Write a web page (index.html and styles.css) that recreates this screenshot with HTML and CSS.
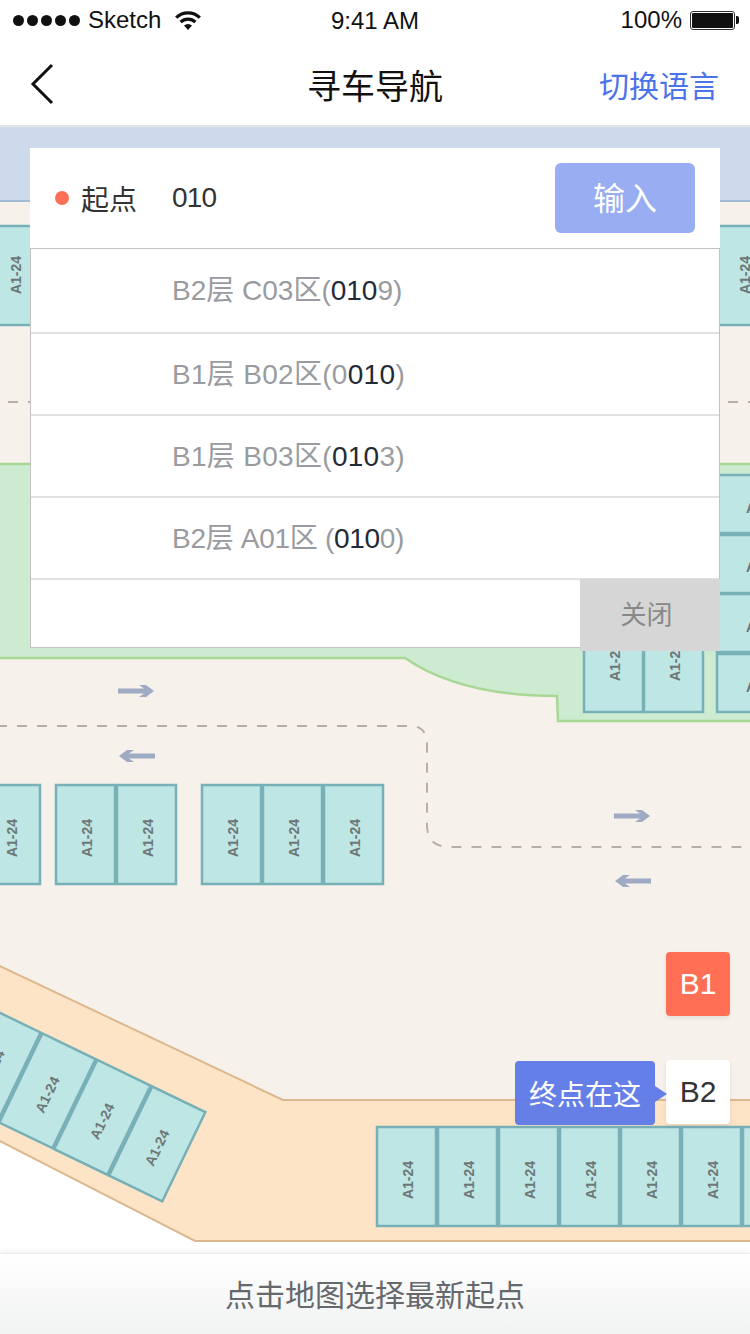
FILE: index.html
```html
<!DOCTYPE html>
<html lang="zh-CN">
<head>
    <meta charset="UTF-8">
    <meta name="viewport" content="width=device-width, initial-scale=1.0">
    <title>寻车导航</title>
    <link rel="stylesheet" href="styles.css">
</head>
<body>
    <div id="app">
        <div class="status-bar">
            <div class="status-left">
                <div class="signal"><i></i><i></i><i></i><i></i><i></i></div>
                <span class="carrier">Sketch</span>
                <svg class="wifi" width="26" height="19" viewBox="0 0 26 19">
                    <path d="M1.2 6.6A17 17 0 0 1 24.8 6.6" fill="none" stroke="#111" stroke-width="3.2"/>
                    <path d="M5.6 11A10.8 10.8 0 0 1 20.4 11" fill="none" stroke="#111" stroke-width="3.2"/>
                    <path d="M9 14.6a6 6 0 0 1 8 0L13 19z" fill="#111"/>
                </svg>
            </div>
            <span class="clock">9:41 AM</span>
            <div class="status-right">
                <span>100%</span>
                <div class="battery"><div class="battery-level"></div></div>
            </div>
        </div>

        <div class="nav-bar">
            <svg class="back" width="24" height="42" viewBox="0 0 24 42">
                <path d="M22 2L3 21L22 40" fill="none" stroke="#111" stroke-width="3"/>
            </svg>
            <h1>寻车导航</h1>
            <a class="lang">切换语言</a>
        </div>

        <div class="map">
            <svg class="map-canvas" width="750" height="1126" viewBox="0 127 750 1126">
                <defs>
                    <g id="stall">
                        <rect x="1" y="1" width="59" height="99" class="stall-box"/>
                        <text transform="translate(32 54) rotate(-90)" class="stall-label">A1-24</text>
                    </g>
                    <g id="stall-high">
                        <rect x="1" y="1" width="59" height="99" class="stall-box"/>
                        <text transform="translate(32 50) rotate(-90)" class="stall-label">A1-24</text>
                    </g>
                    <path id="arrow" d="M0-2.5H26L21-6H28L36 0L28 6H21L26 2.5H0z" fill="#9eabc2"/>
                </defs>

                <rect x="0" y="127" width="750" height="1126" fill="#fff"/>
                <rect x="0" y="127" width="750" height="75" fill="#cddaeb"/>
                <rect x="0" y="200" width="750" height="2" fill="#a3bcd6"/>
                <rect x="0" y="202" width="750" height="900" fill="#f6f1eb"/>

                <path d="M-3 464H753V721H558L557 696Q460 696 405 658H-3z" fill="#cdebd0" stroke="#a9d795" stroke-width="2.5"/>
                <path d="M-3 964.6L283 1100H753V1241H195L-3 1139.5z" fill="#fde4c6" stroke="#dcb88f" stroke-width="2"/>

                <path d="M8 402H750" class="road"/>
                <path d="M-3 726H411Q427 726 427 745V825Q427 847 450 847H750" class="road"/>

                <use href="#arrow" transform="translate(118 691)"/>
                <use href="#arrow" transform="translate(155 756) scale(-1 1)"/>
                <use href="#arrow" transform="translate(614 816)"/>
                <use href="#arrow" transform="translate(651 881) scale(-1 1)"/>

                <use href="#stall-high" x="-16" y="225"/>
                <use href="#stall-high" x="713" y="225"/>

                <use href="#stall-high" x="583" y="612"/>
                <use href="#stall-high" x="643" y="612"/>

                <g class="stall-side">
                    <rect x="717" y="475" width="60" height="58" class="stall-box"/>
                    <rect x="717" y="535" width="60" height="58" class="stall-box"/>
                    <rect x="717" y="594" width="60" height="58" class="stall-box"/>
                    <rect x="717" y="654" width="60" height="58" class="stall-box"/>
                    <text x="746" y="513" class="stall-label-flat">A1-24</text>
                    <text x="746" y="572" class="stall-label-flat">A1-24</text>
                    <text x="746" y="632" class="stall-label-flat">A1-24</text>
                    <text x="746" y="692" class="stall-label-flat">A1-24</text>
                </g>

                <use href="#stall" x="-20" y="784"/>
                <use href="#stall" x="55" y="784"/>
                <use href="#stall" x="116" y="784"/>
                <use href="#stall" x="201" y="784"/>
                <use href="#stall" x="262" y="784"/>
                <use href="#stall" x="323" y="784"/>

                <g transform="translate(206.7 1111.7) rotate(25.8)">
                    <use href="#stall" x="-61" y="0"/>
                    <use href="#stall" x="-122" y="0"/>
                    <use href="#stall" x="-183" y="0"/>
                    <use href="#stall" x="-244" y="0"/>
                    <use href="#stall" x="-305" y="0"/>
                </g>

                <use href="#stall" x="376" y="1126"/>
                <use href="#stall" x="437" y="1126"/>
                <use href="#stall" x="498" y="1126"/>
                <use href="#stall" x="559" y="1126"/>
                <use href="#stall" x="620" y="1126"/>
                <use href="#stall" x="681" y="1126"/>
                <use href="#stall" x="742" y="1126"/>
            </svg>

            <div class="search-panel">
                <div class="search-head">
                    <i class="dot"></i>
                    <span class="search-label">起点</span>
                    <span class="search-value">010</span>
                    <button class="input-btn">输入</button>
                </div>
                <div class="result-list">
                    <div class="result">B2层 C03区(<b>010</b>9)</div>
                    <div class="result result-wide">B1层 B02区(0<b>010</b>)</div>
                    <div class="result result-wide">B1层 B03区(<b>010</b>3)</div>
                    <div class="result result-tight">B2层 A01区 (<b>010</b>0)</div>
                    <div class="result-foot">
                        <button class="close-btn">关闭</button>
                    </div>
                </div>
            </div>

            <div class="floors">
                <button class="floor floor-on">B1</button>
                <div class="floor-wrap">
                    <div class="end-tip">终点在这</div>
                    <button class="floor">B2</button>
                </div>
            </div>
        </div>

        <div class="bottom-bar">点击地图选择最新起点</div>
    </div>
</body>
</html>
```

FILE: styles.css
```css
body {
    font-family: "Liberation Sans", "Noto Sans CJK SC", sans-serif;
    background: white;
    color: #333;
    margin: 0;
    padding: 0;
}
button {
    font-family: inherit;
    border: none;
    padding: 0;
}
#app {
    width: 750px;
    height: 1334px;
    display: flex;
    flex-direction: column;
    overflow: hidden;
}

/* status bar */
.status-bar {
    height: 40px;
    flex: none;
    position: relative;
    display: flex;
    align-items: center;
    justify-content: space-between;
    padding: 0 15px 0 13px;
    font-size: 24px;
    color: #111;
}
.status-left, .status-right {
    display: flex;
    align-items: center;
}
.signal {
    display: flex;
    gap: 3px;
}
.signal i {
    width: 11px;
    height: 11px;
    border-radius: 50%;
    background: #111;
}
.carrier {
    margin-left: 8px;
}
.wifi {
    margin-left: 14px;
}
.clock {
    position: absolute;
    left: 331px;
    top: 7px;
}
.battery {
    position: relative;
    width: 45px;
    height: 19px;
    margin-left: 8px;
    box-sizing: border-box;
    border: 1px solid #333;
    border-radius: 3px;
    padding: 1px;
}
.battery::after {
    content: "";
    position: absolute;
    right: -5px;
    top: 4px;
    width: 3px;
    height: 8px;
    background: #111;
    border-radius: 0 2px 2px 0;
}
.battery-level {
    height: 100%;
    background: #111;
    border-radius: 1px;
}

/* nav bar */
.nav-bar {
    height: 87px;
    flex: none;
    box-sizing: border-box;
    border-bottom: 2px solid #e4e4e4;
    position: relative;
    display: flex;
    align-items: center;
    justify-content: space-between;
    padding: 2px 31px 0 30px;
}
.nav-bar h1 {
    position: absolute;
    left: 0;
    right: 0;
    margin: 2px 0 0;
    text-align: center;
    font-size: 34px;
    font-weight: normal;
    color: #111;
}
.lang {
    font-size: 30px;
    color: #4c74ea;
}

/* map */
.map {
    height: 1126px;
    flex: none;
    position: relative;
}
.map-canvas {
    position: absolute;
    left: 0;
    top: 0;
}
.road {
    fill: none;
    stroke: #b8adaa;
    stroke-width: 2;
    stroke-dasharray: 10 10;
}
.stall-box {
    fill: #bde6e4;
    stroke: #78b0b8;
    stroke-width: 2.5;
}
.stall-label, .stall-label-flat {
    font-family: "Liberation Sans", sans-serif;
    font-size: 14px;
    font-weight: bold;
    fill: #6e7778;
}
.stall-label {
    text-anchor: middle;
    dominant-baseline: central;
}

/* search panel */
.search-panel {
    position: absolute;
    left: 30px;
    top: 21px;
    width: 690px;
}
.search-head {
    height: 100px;
    background: white;
    display: flex;
    align-items: center;
    padding: 0 25px;
    box-sizing: border-box;
}
.dot {
    width: 14px;
    height: 14px;
    border-radius: 50%;
    background: #fe6f55;
}
.search-label {
    font-size: 28px;
    margin-left: 12px;
}
.search-value {
    font-size: 28px;
    letter-spacing: -0.8px;
    margin-left: 35px;
}
.input-btn {
    margin-left: auto;
    width: 140px;
    height: 70px;
    border-radius: 6px;
    background: #98adf2;
    color: white;
    font-size: 32px;
    padding-bottom: 4px;
}
.result-list {
    height: 400px;
    box-sizing: border-box;
    background: white;
    border: 1px solid #c2c2c2;
    display: flex;
    flex-direction: column;
}
.result {
    height: 82px;
    flex: none;
    box-sizing: border-box;
    border-bottom: 2px solid #e2e2e2;
    padding: 1px 0 0 141px;
    line-height: 80px;
    white-space: pre;
    font-size: 28px;
    color: #999ba0;
}
.result:first-child {
    height: 85px;
    padding-top: 0;
    line-height: 83px;
}
.result-wide {
    letter-spacing: 0.3px;
}
.result-tight {
    letter-spacing: -0.3px;
}
.result b {
    font-weight: normal;
    color: #222a36;
}
.result-foot {
    flex: 1;
    display: flex;
    justify-content: flex-end;
    align-items: flex-start;
}
.close-btn {
    width: 140px;
    height: 72px;
    margin: -1px -1px 0 0;
    padding: 0 7px 5px 0;
    flex: none;
    background: #d6d6d6;
    color: #888;
    font-size: 26px;
}

/* floor switch */
.floors {
    position: absolute;
    right: 20px;
    top: 825px;
    display: flex;
    flex-direction: column;
    gap: 44px;
}
.floor {
    display: block;
    width: 64px;
    height: 64px;
    border-radius: 4px;
    background: white;
    color: #333;
    font-size: 30px;
    box-shadow: 0 2px 4px rgba(0, 0, 0, 0.08);
}
.floor-on {
    background: #fe6f55;
    color: white;
}
.floor-wrap {
    position: relative;
}
.end-tip {
    position: absolute;
    right: calc(100% + 11px);
    top: 1px;
    width: 140px;
    height: 64px;
    border-radius: 4px;
    background: rgba(96, 123, 232, 0.97);
    color: white;
    font-size: 28px;
    display: flex;
    align-items: center;
    justify-content: center;
}
.end-tip::after {
    content: "";
    position: absolute;
    left: 100%;
    top: 25px;
    border-left: 12px solid rgba(96, 123, 232, 0.97);
    border-top: 8px solid transparent;
    border-bottom: 8px solid transparent;
}

/* bottom bar */
.bottom-bar {
    height: 81px;
    flex: none;
    box-sizing: border-box;
    border-top: 1px solid #ececec;
    padding-bottom: 3px;
    background: linear-gradient(#fff, #f1f2f2);
    box-shadow: 0 -2px 4px rgba(0, 0, 0, 0.05);
    position: relative;
    display: flex;
    align-items: center;
    justify-content: center;
    font-size: 30px;
    color: #65686c;
}
```
